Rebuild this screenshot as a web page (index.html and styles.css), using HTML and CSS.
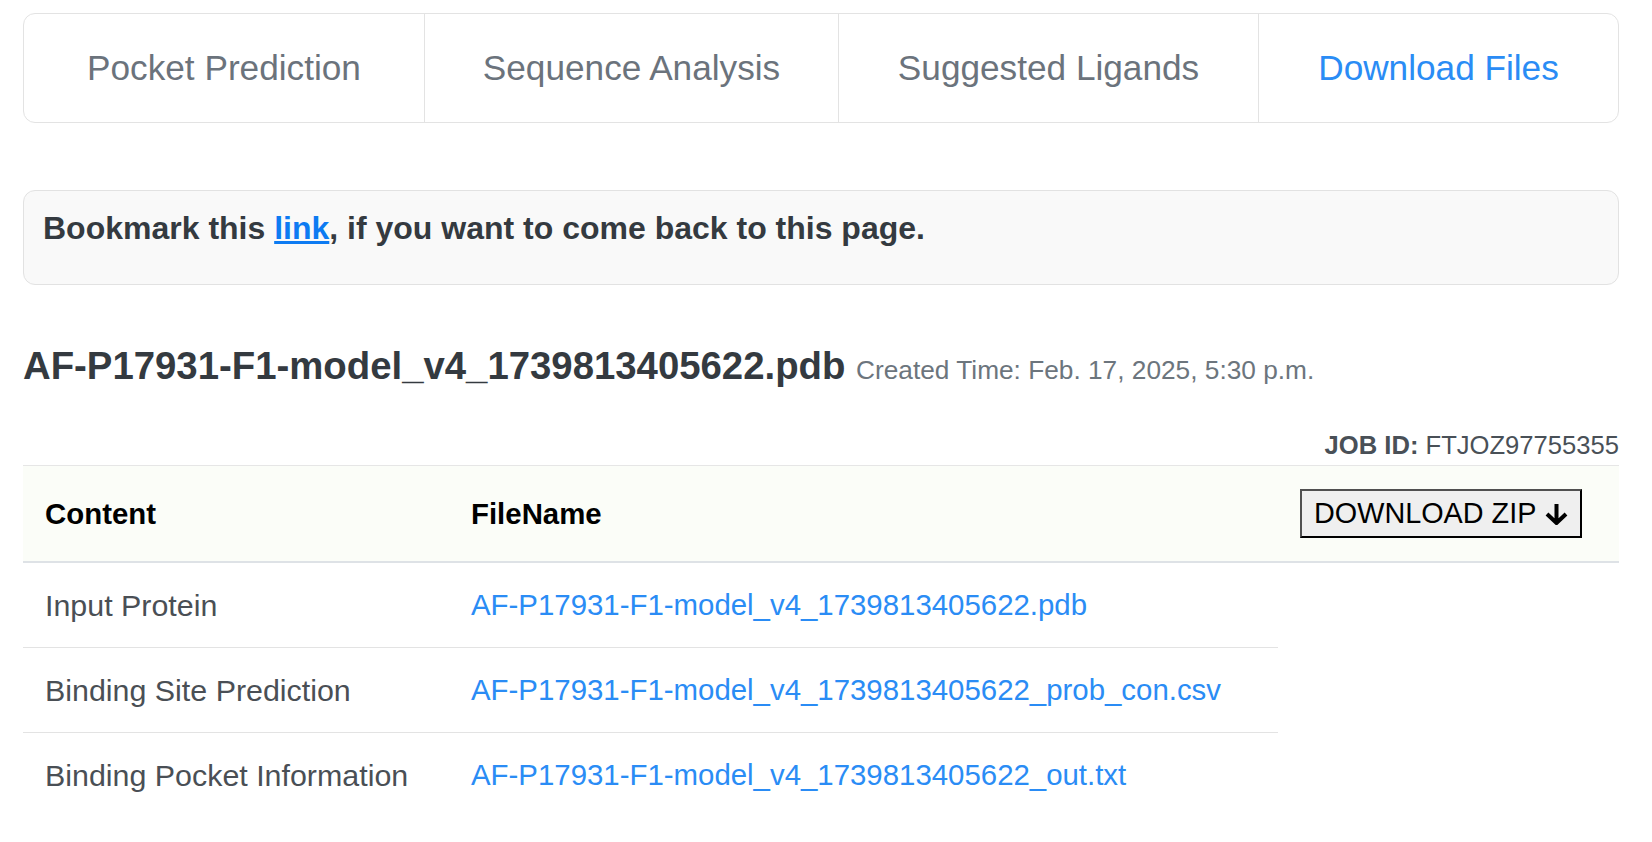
FILE: index.html
```html
<!DOCTYPE html>
<html>
<head>
<meta charset="utf-8">
<link rel="stylesheet" href="styles.css">
</head>
<body>
<div class="page">
  <nav class="tabs">
    <a class="tab">Pocket Prediction</a>
    <a class="tab">Sequence Analysis</a>
    <a class="tab">Suggested Ligands</a>
    <a class="tab active">Download Files</a>
  </nav>

  <div class="notice">
    <p class="notice-text">Bookmark this <a class="notice-link" href="#">link</a>, if you want to come back to this page.</p>
  </div>

  <h2 class="title">AF-P17931-F1-model_v4_1739813405622.pdb <span class="created">Created Time: Feb. 17, 2025, 5:30 p.m.</span></h2>

  <div class="jobid"><b>JOB ID:</b> FTJOZ97755355</div>

  <table class="files">
    <thead>
      <tr>
        <th class="c-content">Content</th>
        <th class="c-name">FileName</th>
        <th class="c-action">
          <button class="zip-btn">DOWNLOAD ZIP
            <svg class="arrow" width="25" height="22" viewBox="0 0 25 22"><path d="M12.5 1 V20 M3 11 L12.5 20 L22 11" fill="none" stroke="#000" stroke-width="4" stroke-linejoin="miter"/></svg>
          </button>
        </th>
      </tr>
    </thead>
    <tbody>
      <tr>
        <td class="label">Input Protein</td>
        <td><a class="file-link" href="#">AF-P17931-F1-model_v4_1739813405622.pdb</a></td>
      </tr>
      <tr>
        <td class="label">Binding Site Prediction</td>
        <td><a class="file-link" href="#">AF-P17931-F1-model_v4_1739813405622_prob_con.csv</a></td>
      </tr>
      <tr class="last">
        <td class="label">Binding Pocket Information</td>
        <td><a class="file-link" href="#">AF-P17931-F1-model_v4_1739813405622_out.txt</a></td>
      </tr>
    </tbody>
  </table>
</div>
</body>
</html>
```
FILE: styles.css
```css
* { box-sizing: border-box; }
html, body { margin: 0; padding: 0; background: #fff; }
body {
  font-family: "Liberation Sans", Arial, Helvetica, sans-serif;
  color: #343a40;
}
.page {
  width: 1596px;
  margin-left: 23px;
  padding-top: 13px;
}
.tabs {
  display: grid;
  grid-template-columns: 400px 414px 420px 360px;
  border: 1px solid #e3e3e3;
  border-radius: 12px;
  height: 110px;
}
.tab {
  display: flex;
  align-items: center;
  justify-content: center;
  font-size: 35.2px;
  color: #6b737c;
  border-left: 1px solid #e3e3e3;
  white-space: nowrap;
}
.tab:first-child { border-left: none; }
.tab.active { color: #2a8cf5; }

.notice {
  margin-top: 67px;
  height: 95px;
  background: #f9f9f9;
  border: 1px solid #e2e2e2;
  border-radius: 12px;
  padding: 14px 19px 0;
}
.notice-text {
  margin: 0;
  font-size: 32px;
  font-weight: bold;
  line-height: 46px;
  color: #343a40;
}
.notice-link { color: #0d7bf2; }

.title {
  margin: 58px 0 0;
  font-size: 38.35px;
  line-height: 46px;
  font-weight: bold;
  color: #343a40;
  white-space: nowrap;
}
.created {
  font-size: 26.25px;
  font-weight: normal;
  color: #6c757d;
}

.jobid {
  margin-top: 37px;
  text-align: right;
  font-size: 25.6px;
  line-height: 30px;
  color: #495057;
}
.jobid b { font-weight: bold; }

.files {
  margin-top: 5px;
  width: 1596px;
  border-collapse: collapse;
  font-size: 29.4px;
}
.files thead tr {
  background: #fbfdf8;
  border-top: 1px solid #e6e6e6;
  border-bottom: 2px solid #dee2e6;
}
.files th {
  text-align: left;
  font-weight: bold;
  color: #000;
  padding: 23px 22px;
  line-height: 44px;
  vertical-align: middle;
}
.c-content { width: 426px; }
.c-name { width: 829px; }
.c-action { width: 341px; }
.files td {
  padding: 20px 22px;
  line-height: 44px;
  color: #4a4f55;
  border-bottom: 1px solid #e3e3e3;
  white-space: nowrap;
}
.files td.label { font-size: 30.4px; }
.files tr.last td { border-bottom: none; }
.file-link { color: #2a8cf5; text-decoration: none; }

.zip-btn {
  display: inline-flex;
  align-items: center;
  gap: 8px;
  height: 49px;
  padding: 0 11px 0 12px;
  background: #efefef;
  border: 2px solid;
  border-color: #505050 #000 #000 #505050;
  font-family: "Liberation Sans", Arial, sans-serif;
  font-size: 28.8px;
  color: #000;
  vertical-align: middle;
}
.arrow { display: block; }
```
